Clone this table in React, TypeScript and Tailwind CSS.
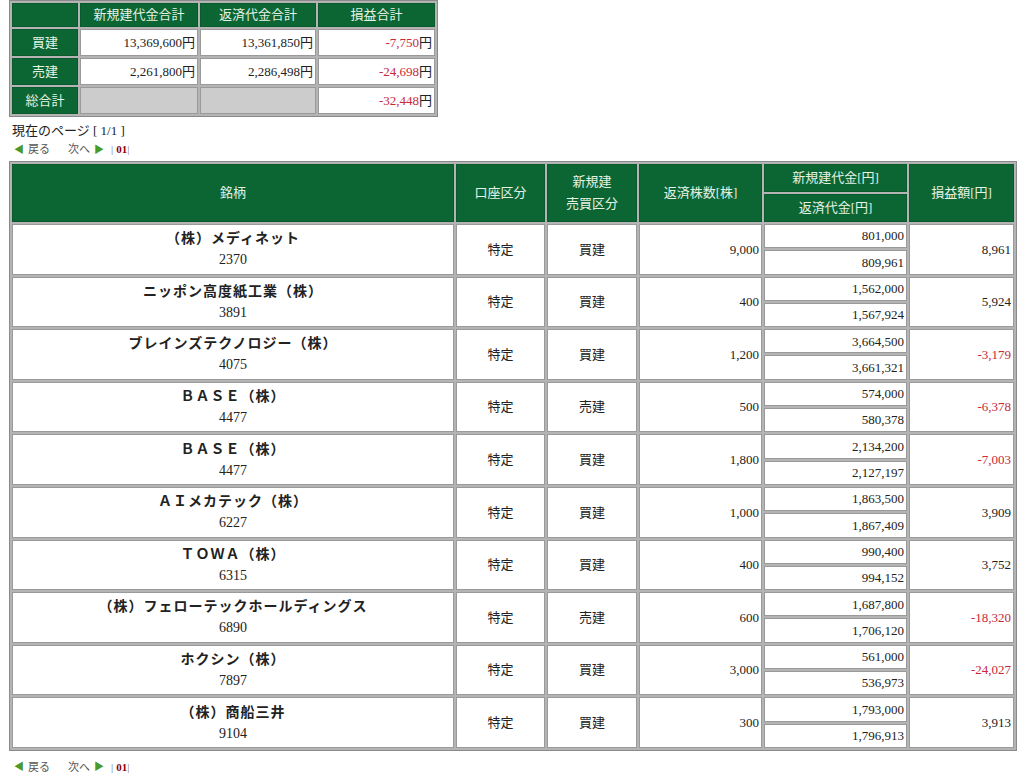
import React from "react";

const font = { fontFamily: '"Liberation Serif", "Noto Sans CJK JP", serif' };

const summary = [
  { label: "買建", open: "13,369,600円", close: "13,361,850円", pl: "-7,750" },
  { label: "売建", open: "2,261,800円", close: "2,286,498円", pl: "-24,698" },
];

const rows = [
  { name: "（株）メディネット", code: "2370", side: "買建", qty: "9,000", open: "801,000", close: "809,961", pl: "8,961" },
  { name: "ニッポン高度紙工業（株）", code: "3891", side: "買建", qty: "400", open: "1,562,000", close: "1,567,924", pl: "5,924" },
  { name: "ブレインズテクノロジー（株）", code: "4075", side: "買建", qty: "1,200", open: "3,664,500", close: "3,661,321", pl: "-3,179" },
  { name: "ＢＡＳＥ（株）", code: "4477", side: "売建", qty: "500", open: "574,000", close: "580,378", pl: "-6,378" },
  { name: "ＢＡＳＥ（株）", code: "4477", side: "買建", qty: "1,800", open: "2,134,200", close: "2,127,197", pl: "-7,003" },
  { name: "ＡＩメカテック（株）", code: "6227", side: "買建", qty: "1,000", open: "1,863,500", close: "1,867,409", pl: "3,909" },
  { name: "ＴＯＷＡ（株）", code: "6315", side: "買建", qty: "400", open: "990,400", close: "994,152", pl: "3,752" },
  { name: "（株）フェローテックホールディングス", code: "6890", side: "売建", qty: "600", open: "1,687,800", close: "1,706,120", pl: "-18,320" },
  { name: "ホクシン（株）", code: "7897", side: "買建", qty: "3,000", open: "561,000", close: "536,973", pl: "-24,027" },
  { name: "（株）商船三井", code: "9104", side: "買建", qty: "300", open: "1,793,000", close: "1,796,913", pl: "3,913" },
];

const th = "bg-[#0b6634] text-[#e4f2e4] font-normal text-[13px] text-center border border-[#0b5a2e]";
const td = "bg-white text-[13px] text-[#222] border border-[#9a9a9a]";

const Pager = () => (
  <div className="flex items-center gap-1 text-[11px] text-[#555] h-[16px] pl-[5px]">
    <span className="text-[#4a9a2a] text-[10px]">◀</span>
    <span>戻る</span>
    <span className="ml-[14px]">次へ</span>
    <span className="text-[#4a9a2a] text-[10px]">▶</span>
    <span className="ml-[3px] text-[#777]">|</span>
    <span className="font-bold text-[#8b0000] -ml-[1px]">01</span>
    <span className="text-[#777] -ml-[4px]">|</span>
  </div>
);

export default function App() {
  return (
    <div className="w-[1024px] h-[779px] bg-white overflow-hidden pl-[9px]" style={font}>
      <table className="border-separate border-spacing-[2px] bg-[#b4b4b4] border border-[#8a8a8a] w-[425px] table-fixed">
        <colgroup>
          <col className="w-[66px]" />
          <col className="w-[118px]" />
          <col className="w-[116px]" />
          <col className="w-[117px]" />
        </colgroup>
        <tbody>
          <tr className="h-[24px]">
            <td className={th}></td>
            <td className={th}>新規建代金合計</td>
            <td className={th}>返済代金合計</td>
            <td className={th}>損益合計</td>
          </tr>
          {summary.map((s) => (
            <tr key={s.label} className="h-[27px]">
              <td className={th}>{s.label}</td>
              <td className={`${td} text-right pr-[2px]`}>{s.open}</td>
              <td className={`${td} text-right pr-[2px]`}>{s.close}</td>
              <td className={`${td} text-right pr-[2px]`}>
                <span className="text-[#c8283a]">{s.pl}</span>円
              </td>
            </tr>
          ))}
          <tr className="h-[27px]">
            <td className={th}>総合計</td>
            <td className="bg-[#cccccc] border border-[#9a9a9a]"></td>
            <td className="bg-[#cccccc] border border-[#9a9a9a]"></td>
            <td className={`${td} text-right pr-[2px]`}>
              <span className="text-[#c8283a]">-32,448</span>円
            </td>
          </tr>
        </tbody>
      </table>

      <div className="text-[13px] text-[#222] mt-[4px] pl-[3px] h-[20px] leading-[20px]">現在のページ [ 1/1 ]</div>
      <Pager />

      <table className="mt-[4px] border-separate border-spacing-[2px] bg-[#b4b4b4] border border-[#8a8a8a] w-[1006px] table-fixed">
        <colgroup>
          <col className="w-[442px]" />
          <col className="w-[89px]" />
          <col className="w-[90px]" />
          <col className="w-[123px]" />
          <col className="w-[143px]" />
          <col className="w-[105px]" />
        </colgroup>
        <tbody>
          <tr className="h-[28px]">
            <td rowSpan={2} className={th}>銘柄</td>
            <td rowSpan={2} className={th}>口座区分</td>
            <td rowSpan={2} className={`${th} leading-[22px]`}>新規建<br />売買区分</td>
            <td rowSpan={2} className={th}>返済株数[株]</td>
            <td className={th}>新規建代金[円]</td>
            <td rowSpan={2} className={th}>損益額[円]</td>
          </tr>
          <tr className="h-[28px]">
            <td className={th}>返済代金[円]</td>
          </tr>
          {rows.map((r, i) => (
            <React.Fragment key={i}>
              <tr className="h-[24.3px]">
                <td rowSpan={2} className={`${td} text-center text-[14px] leading-[21px]`}>
                  <div className="font-bold tracking-[1px]">{r.name}</div>
                  <div>{r.code}</div>
                </td>
                <td rowSpan={2} className={`${td} text-center`}>特定</td>
                <td rowSpan={2} className={`${td} text-center`}>{r.side}</td>
                <td rowSpan={2} className={`${td} text-right pr-[2px]`}>{r.qty}</td>
                <td className={`${td} text-right pr-[2px]`}>{r.open}</td>
                <td rowSpan={2} className={`${td} text-right pr-[2px] ${r.pl.startsWith("-") ? "text-[#c8283a]" : ""}`}>
                  {r.pl}
                </td>
              </tr>
              <tr className="h-[24.3px]">
                <td className={`${td} text-right pr-[2px]`}>{r.close}</td>
              </tr>
            </React.Fragment>
          ))}
        </tbody>
      </table>
      <div className="mt-[8px]">
        <Pager />
      </div>
    </div>
  );
}
